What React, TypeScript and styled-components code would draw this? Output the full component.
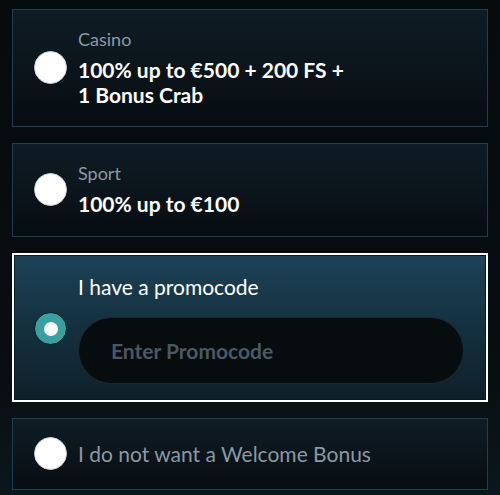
import styled, { createGlobalStyle, css } from "styled-components";
import { useState } from "react";

const GlobalStyle = createGlobalStyle`
  html, body {
    margin: 0;
    padding: 0;
    background: linear-gradient(180deg, #060b0e 0%, #070d10 70%, #0b171d 100%);
    font-family: "Lato", "Noto Sans", sans-serif;
    min-height: 495px;
  }
`;

const SList = styled.div`
  display: flex;
  flex-direction: column;
  gap: 16px;
  padding: 9px 12px;
  width: 476px;
`;

const SOption = styled.label<{ $active: boolean }>`
  display: flex;
  align-items: center;
  gap: 11px;
  padding: 18px 20px 19px 21px;
  border: 1px solid #1e3e51;
  background: linear-gradient(180deg, #0f1c25 0%, #070d11 100%);
  cursor: pointer;
  ${(p) =>
    p.$active &&
    css`
      border: 2px solid #ffffff;
      box-shadow: inset 0 0 0 1px #0a1a22;
      padding: 19px 22px 16px 20px;
      background: linear-gradient(180deg, #1d4257 0%, #14303f 50%, #0e2029 100%);
    `}
`;

const SRadio = styled.span<{ $active: boolean }>`
  flex: 0 0 33px;
  height: 33px;
  border-radius: 50%;
  box-sizing: border-box;
  display: flex;
  align-items: center;
  justify-content: center;
  background: #ffffff;
  border: 1px solid #c8d0d5;
  ${(p) =>
    p.$active &&
    css`
      background: #38a19f;
      border: 1px solid #0b1a20;
      &::after {
        content: "";
        width: 14px;
        height: 14px;
        border-radius: 50%;
        background: #ffffff;
      }
    `}
`;

const SBody = styled.div`
  display: flex;
  flex-direction: column;
  flex: 1;
`;

const SCategory = styled.span`
  color: #8b99a3;
  font-size: 18px;
  line-height: 22px;
  margin-bottom: 8px;
`;

const STitle = styled.span`
  color: #ffffff;
  font-size: 21px;
  font-weight: 700;
  line-height: 24.5px;
`;

const SPlain = styled.span<{ $active: boolean }>`
  color: ${(p) => (p.$active ? "#ffffff" : "#8b99a3")};
  font-size: 21px;
  line-height: 25px;
`;

const SInput = styled.input`
  margin-top: 18px;
  height: 67px;
  box-sizing: border-box;
  border-radius: 34px;
  border: 1px solid #1a2a33;
  background: #070c0f;
  padding: 0 32px;
  font-family: "Lato", "Noto Sans", sans-serif;
  font-size: 21px;
  font-weight: 700;
  color: #ffffff;
  outline: none;
  &::placeholder {
    color: #4a5963;
  }
`;

const bonuses = [
  { id: "casino", category: "Casino", title: ["100% up to €500 + 200 FS +", "1 Bonus Crab"] },
  { id: "sport", category: "Sport", title: ["100% up to €100"] },
];

export default function App() {
  const [selected, setSelected] = useState("promo");

  return (
    <>
      <GlobalStyle />
      <SList>
        {bonuses.map((b) => (
          <SOption key={b.id} $active={selected === b.id} onClick={() => setSelected(b.id)}>
            <SRadio $active={selected === b.id} />
            <SBody>
              <SCategory>{b.category}</SCategory>
              {b.title.map((line) => (
                <STitle key={line}>{line}</STitle>
              ))}
            </SBody>
          </SOption>
        ))}
        <SOption $active={selected === "promo"} onClick={() => setSelected("promo")}>
          <SRadio $active={selected === "promo"} />
          <SBody>
            <SPlain $active={selected === "promo"}>I have a promocode</SPlain>
            <SInput placeholder="Enter Promocode" />
          </SBody>
        </SOption>
        <SOption $active={selected === "none"} onClick={() => setSelected("none")}>
          <SRadio $active={selected === "none"} />
          <SBody>
            <SPlain $active={selected === "none"}>I do not want a Welcome Bonus</SPlain>
          </SBody>
        </SOption>
      </SList>
    </>
  );
}
